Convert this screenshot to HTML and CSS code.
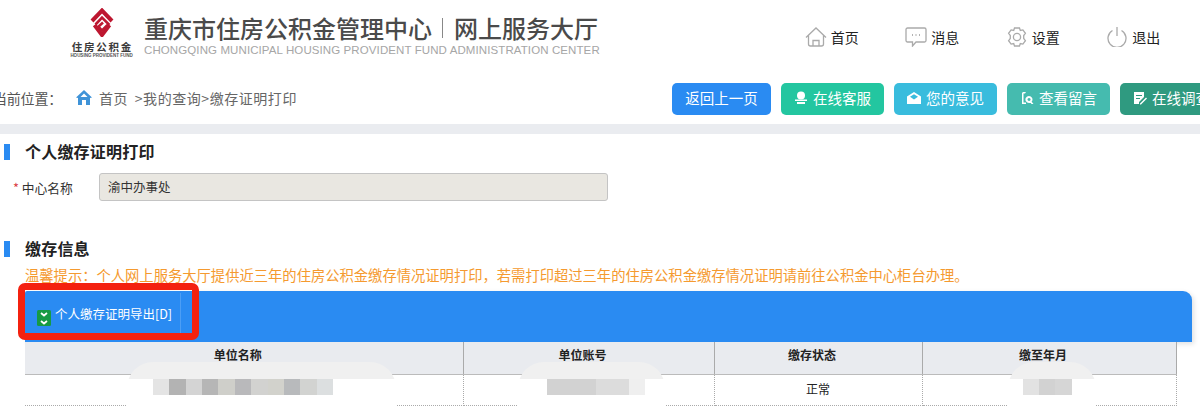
FILE: index.html
```html
<!DOCTYPE html>
<html lang="zh-CN">
<head>
<meta charset="utf-8">
<title>个人缴存证明打印</title>
<link rel="stylesheet" href="styles.css">
</head>
<body>
<div class="page">
  <header class="top">
    <div class="logo">
      <svg class="mark" viewBox="0 0 24 29" width="24" height="29">
        <path class="red-stroke" d="M2 13 12 2.500 22 13" />
        <path class="red-stroke" d="M4.500 17 12 27 19.500 17" />
        <path class="red-stroke thin" d="M5.500 16.500 12 9.500 18.500 16 12 22.500 8.500 18.500 13 14.500" />
      </svg>
      <div class="logo-cn">住房公积金</div>
      <div class="logo-en">HOUSING PROVIDENT FUND</div>
    </div>
    <div class="brand">
      <div class="brand-cn"><span>重庆市住房公积金管理中心</span><i class="brand-sep"></i><span>网上服务大厅</span></div>
      <div class="brand-en">CHONGQING MUNICIPAL HOUSING PROVIDENT FUND ADMINISTRATION CENTER</div>
    </div>
    <nav class="nav">
      <a class="nav-item">
        <svg class="nav-icon" viewBox="0 0 22 20"><path d="M1 10.500 11 1l10 9.500M3.500 8.500V17a2 2 0 0 0 2 2h11a2 2 0 0 0 2-2V8.500M8 19v-5.500h6V19"/></svg>
        <span>首页</span>
      </a>
      <a class="nav-item">
        <svg class="nav-icon" viewBox="0 0 22 20"><path d="M2.500 1h17A1.500 1.500 0 0 1 21 2.500v11a1.500 1.500 0 0 1-1.500 1.500H11l-3.500 4v-4h-5A1.500 1.500 0 0 1 1 13.500v-11A1.500 1.500 0 0 1 2.500 1z"/><path class="dots" d="M7 8h1M10.500 8h1M14 8h1"/></svg>
        <span>消息</span>
      </a>
      <a class="nav-item">
        <svg class="nav-icon" viewBox="0 0 22 20"><path d="M8.500 1h5l.8 2.500 2.600-.6 2.500 3.400-1.700 2.200v3l1.700 2.200-2.500 3.400-2.600-.6-.8 2.500h-5l-.8-2.500-2.600.6-2.500-3.400 1.700-2.200v-3L2.600 6.300l2.500-3.400 2.600.6z"/><circle cx="11" cy="10" r="3.600"/></svg>
        <span>设置</span>
      </a>
      <a class="nav-item">
        <svg class="nav-icon" viewBox="0 0 22 20"><path d="M6.500 3.500a9 9 0 1 0 9 0M11 0v9"/></svg>
        <span>退出</span>
      </a>
    </nav>
  </header>

  <div class="crumb-row">
    <div class="crumb">
      <span class="crumb-lead">当前位置：</span>
      <svg class="crumb-home" viewBox="0 0 16 15" width="16" height="15"><path class="home-fill" d="M8 0 16 7.500 14 8v7H2V8L0 7.500z"/><path class="home-cut" d="M6 15v-5h4v5zM8 3.500 4.500 7h7z"/></svg>
      <span class="crumb-path">首页 &gt;我的查询&gt;缴存证明打印</span>
    </div>
    <div class="actions">
      <a class="act act-blue act-back">返回上一页</a>
      <a class="act act-green"><svg class="act-icon" viewBox="0 0 14 14"><circle cx="7" cy="4.500" r="4"/><path d="M1 8.500h12v1.500H1zM3 11h8v2H3z"/></svg>在线客服</a>
      <a class="act act-cyan"><svg class="act-icon" viewBox="0 0 14 14"><path d="M0 5.500 7 1l7 4.500V13H0zM3 5.800 7 8.500l4-2.700L7 3.200z"/></svg>您的意见</a>
      <a class="act act-teal"><svg class="act-icon" viewBox="0 0 14 14"><path d="M3 1h3L5 2.500H3.500v9H6V13H2V2zM9 5a3.500 3.500 0 1 1-.1 0zm0 2a1.500 1.500 0 1 0 .1 0zM11.500 10.500 13.500 13h-2L10 11z"/></svg>查看留言</a>
      <a class="act act-deep"><svg class="act-icon" viewBox="0 0 14 14"><path d="M1 1h10v5L6 11v2H1zM3 4v1h6V4zM3 7v1h4V7zM13 6.500l1 1L8 13.500H7v-1z"/></svg>在线调查</a>
    </div>
  </div>

  <div class="band"></div>

  <main class="content">
    <h2 class="sec-title sec-first">个人缴存证明打印</h2>
    <div class="field">
      <label class="field-label"><em>*</em> 中心名称</label>
      <div class="field-input">渝中办事处</div>
    </div>

    <h2 class="sec-title sec-second">缴存信息</h2>
    <p class="tip">温馨提示：个人网上服务大厅提供近三年的住房公积金缴存情况证明打印，若需打印超过三年的住房公积金缴存情况证明请前往公积金中心柜台办理。</p>

    <section class="grid">
      <div class="toolbar">
        <a class="tool-btn">
          <svg class="tool-icon" viewBox="0 0 14 16" width="14" height="16"><rect width="14" height="16" rx="1.500"/><path d="M4 3l3 2.500L10 3M4 11l3 2.500L10 11"/></svg>
          个人缴存证明导出[D]
        </a>
      </div>
      <table class="tbl">
        <colgroup><col class="c1"><col class="c2"><col class="c3"><col class="c4"></colgroup>
        <thead><tr><th>单位名称</th><th>单位账号</th><th>缴存状态</th><th>缴至年月</th></tr></thead>
        <tbody><tr><td></td><td></td><td>正常</td><td></td></tr></tbody>
      </table>
      <div class="blur blur-a"><i class="mosaic"></i></div>
      <div class="blur blur-b"><i class="mosaic"></i></div>
      <div class="blur blur-c"><i class="mosaic"></i></div>
      <div class="redbox"></div>
    </section>
  </main>
</div>
</body>
</html>
```

FILE: styles.css
```css
* { box-sizing: border-box; }
html, body { margin: 0; padding: 0; background: #fff; }
body {
  font-family: "Noto Sans CJK SC", "Liberation Sans", sans-serif;
  font-size: 14px;
  color: #333;
}
.page { width: 1200px; height: 412px; overflow: hidden; }

/* header */
.top { display: flex; height: 83px; }
.logo { width: 59px; margin: 8px 13px 0 72px; display: flex; flex-direction: column; align-items: center; }
.mark { display: block; }
.red-stroke { fill: none; stroke: #bd1730; stroke-width: 4; stroke-linejoin: miter; }
.red-stroke.thin { stroke-width: 2.600; }
.logo-cn {
  font-size: 10.500px; line-height: 12px; font-weight: 700; color: #3a3a3a;
  margin-top: 4px; white-space: nowrap; letter-spacing: 1.700px; margin-right: -1.700px;
}
.logo-en { font-size: 4.500px; line-height: 6px; color: #555; white-space: nowrap; font-family: "Liberation Sans", sans-serif; font-weight: 700; }
.brand { width: 456px; padding-top: 11px; }
.brand-cn { display: flex; align-items: center; font-size: 24px; line-height: 34px; font-weight: 500; color: #4a4a4a; white-space: nowrap; }
.brand-sep { width: 1px; height: 20px; background: #888; margin: 0 11px 0 10px; }
.brand-en {
  font-family: "Liberation Sans", sans-serif;
  font-size: 11.500px; line-height: 13px; color: #a6a6a6; white-space: nowrap; letter-spacing: .1px;
  margin-top: -1px;
}
.nav { display: flex; margin-left: 205px; padding-top: 26px; align-items: flex-start; }
.nav-item { display: flex; align-items: center; width: 100.500px; height: 21px; color: #222; font-size: 14px; }
.nav-icon { width: 22px; height: 20px; margin-right: 4px; margin-top: 1px; fill: none; stroke: #aaa; stroke-width: 1.300; flex: none; }
.dots { stroke: #999; stroke-width: 1.500; }

/* breadcrumb + actions */
.crumb-row { display: flex; height: 41px; }
.crumb { width: 672px; margin-left: -7px; flex: none; display: flex; align-items: center; height: 29px; color: #555; font-size: 14px; white-space: nowrap; }
.crumb-lead { width: 76px; flex: none; letter-spacing: -.2px; }
.crumb-home { margin: 0 7px 0 7px; }
.home-fill { fill: #3f93d8; }
.home-cut { fill: #fff; }
.crumb-path { color: #666; letter-spacing: .55px; word-spacing: 3px; }
.actions { display: flex; gap: 10px; flex: none; margin-left: 7px; }
.act {
  display: flex; align-items: center; justify-content: center;
  width: 103px; height: 32px; padding-bottom: 3px; border-radius: 5px; color: #fff; font-size: 14.500px; white-space: nowrap; flex: none;
}
.act-back { width: 99px; }
.act-icon { width: 14px; height: 14px; fill: #fff; margin-right: 5px; flex: none; }
.act-blue { background: #2a8bf2; }
.act-green { background: #23c6a0; }
.act-cyan { background: #39bcdd; }
.act-teal { background: #45bbaf; }
.act-deep { background: #2f9a80; }

.band { height: 10px; background: #eaecf0; }

/* content */
.content { padding-left: 4px; }
.sec-title {
  margin: 0; border-left: 6px solid #2a8bf2; padding-left: 15px;
  font-size: 16px; line-height: 15px; height: 16px; font-weight: 700; color: #222; letter-spacing: .2px;
}
.sec-first { margin-top: 10px; }
.sec-second { margin-top: 40px; }
.field { display: flex; align-items: center; margin-top: 13px; height: 28px; }
.field-label { width: 95px; padding-left: 9px; font-size: 12.750px; color: #333; white-space: nowrap; }
.field-label em { font-style: normal; color: #d9363e; }
.field-input {
  width: 509px; height: 28px; line-height: 25px; padding-left: 8px;
  background: #e9e7e1; border: 1px solid #c4c4c4; border-radius: 3px; font-size: 12.500px; color: #333;
}
.tip { margin: 6px 0 0 21px; font-size: 14.300px; line-height: 24px; height: 28px; color: #f59a2f; white-space: nowrap; }

.grid { position: relative; margin-left: 21px; width: 1167px; height: 200px; }
.toolbar {
  height: 51px; background: #2a8bf2; border-radius: 2px 9px 0 0; display: flex; padding-left: 2px;
  box-shadow: 2px 2px 5px rgba(0, 0, 0, .12);
}
.tool-btn {
  width: 154px; height: 41px; margin-top: 2px; display: flex; align-items: center; padding-left: 10px;
  border-right: 1px solid #4c9ef5; color: #fff; font-size: 12.500px; white-space: nowrap; gap: 4px;
}
.tool-icon { flex: none; margin-top: 8px; }
.tool-icon rect { fill: #169a44; }
.tool-icon path { fill: none; stroke: #fff; stroke-width: 1.800; }
.tbl { border-collapse: collapse; table-layout: fixed; width: 1151px; background: #fff; }
.c1 { width: 438px; } .c2 { width: 251px; } .c3 { width: 208px; } .c4 { width: 254px; }
.tbl th {
  height: 32px; padding: 0 12px 6px 0; background: #e9ebef; font-size: 12px; font-weight: 700; color: #222;
  border-right: 1px solid #aaa; border-bottom: 1px solid #bbb;
}
.tbl td {
  height: 31px; padding: 0 0 3px; text-align: center; font-size: 12px; color: #222;
  border-right: 1px dotted #aaa; border-bottom: 1px dotted #aaa;
}
.blur { position: absolute; display: block; background: linear-gradient(#f0f0f0 0 17px, #fff 17px); border-radius: 26px 26px 0 0; top: 71px; height: 60px; }
.mosaic { position: absolute; top: 17px; height: 16px; display: block; }
.blur-a { left: 102px; width: 269px; }
.blur-a .mosaic {
  left: 26px; width: 180px;
  background: linear-gradient(90deg, #e4e4e4 0 16px, #b3b3b3 16px 33px, #d4d4d4 33px 49px, #b6b6b6 49px 65px, #cfcfca 65px 82px, #b9b9bb 82px 98px, #d2d2d0 98px 115px, #d2d2cc 115px 131px, #b8babc 131px 147px, #d2d3d1 147px 164px, #dcdfe0 164px 180px);
}
.blur-b { left: 493px; width: 147px; }
.blur-b .mosaic {
  left: 29px; width: 98px;
  background: linear-gradient(90deg, #d2d2d2 0 49px, #dcdcdc 49px 82px, #efefef 82px);
}
.blur-c { left: 983px; width: 88px; }
.blur-c .mosaic {
  left: 15px; width: 49px;
  background: linear-gradient(90deg, #e2e2e2 0 16px, #d2d2d2 16px 32px, #d6d6d6 32px);
}
.redbox {
  position: absolute; left: -7px; top: -8px; width: 181px; height: 57px;
  border: 7px solid #f4210f; border-radius: 7px;
}
```
